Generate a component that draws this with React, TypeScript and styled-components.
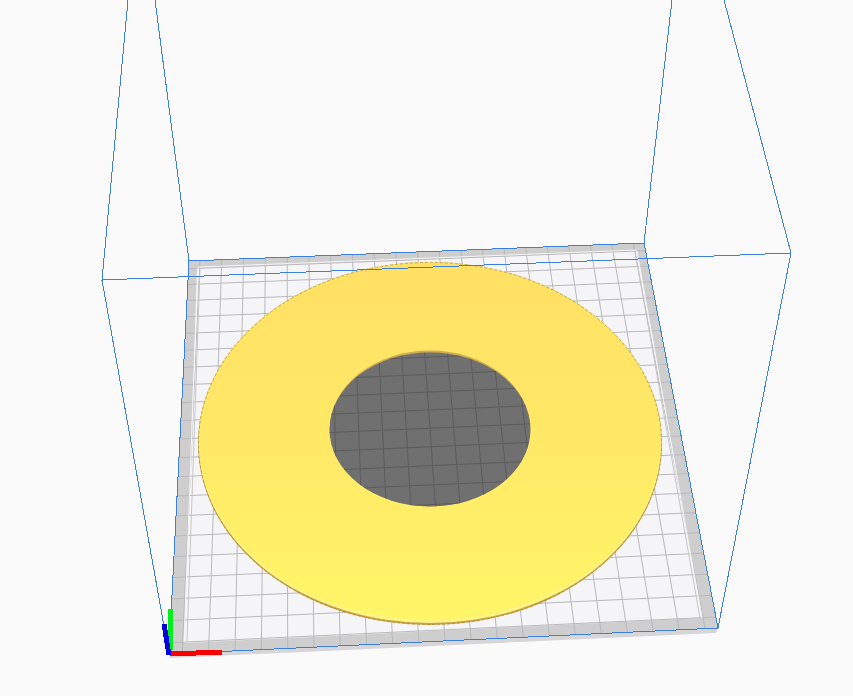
import React from "react";
import styled, { createGlobalStyle } from "styled-components";

const GlobalStyle = createGlobalStyle`
  body {
    margin: 0;
    background: #fafafb;
  }
`;

const Viewport = styled.main`
  width: 100%;
  background: #fafafb;
  overflow: hidden;
`;

const Scene = styled.svg`
  display: block;
  width: 100%;
  height: auto;
`;

const GridLine = styled.path<{ $dark?: boolean }>`
  fill: none;
  stroke: ${(p) => (p.$dark ? "#5c5c5c" : "#b9b9bc")};
  stroke-width: 1;
`;

const VolumeEdge = styled.path`
  fill: none;
  stroke: #3b80d9;
  stroke-width: 1;
  shape-rendering: crispEdges;
`;

const Axis = styled.path<{ $color: string }>`
  fill: none;
  stroke: ${(p) => p.$color};
  stroke-width: 5;
  shape-rendering: crispEdges;
`;

type Point = [number, number];

const CELLS = 21;
const backLeft: Point = [189, 261];
const backRight: Point = [644, 243];
const frontRight: Point = [718, 628];
const frontLeft: Point = [169, 654];

/* Perspective mapping from the unit square to the build plate. */
function makeProjection(a: Point, b: Point, c: Point, d: Point) {
  const sx = a[0] - b[0] + c[0] - d[0];
  const sy = a[1] - b[1] + c[1] - d[1];
  const dx1 = b[0] - c[0];
  const dx2 = d[0] - c[0];
  const dy1 = b[1] - c[1];
  const dy2 = d[1] - c[1];
  const det = dx1 * dy2 - dx2 * dy1;
  const g = (sx * dy2 - dx2 * sy) / det;
  const h = (dx1 * sy - sx * dy1) / det;
  return (u: number, v: number): Point => {
    const w = 1 + g * u + h * v;
    return [
      (a[0] + (b[0] * (1 + g) - a[0]) * u + (d[0] * (1 + h) - a[0]) * v) / w,
      (a[1] + (b[1] * (1 + g) - a[1]) * u + (d[1] * (1 + h) - a[1]) * v) / w,
    ];
  };
}

const project = makeProjection(backLeft, backRight, frontRight, frontLeft);

function segment(from: Point, to: Point) {
  return `M${from[0].toFixed(2)} ${from[1].toFixed(2)}L${to[0].toFixed(2)} ${to[1].toFixed(2)}`;
}

const gridPath = Array.from({ length: CELLS }, (_, i) => {
  const t = (i + 0.5) / CELLS;
  return segment(project(t, 0), project(t, 1)) + segment(project(0, t), project(1, t));
}).join("");

function BuildPlate() {
  return (
    <g>
      <path d="M169 654L718 628L716 633L170 658Z" fill="#d6d6d9" />
      <path d="M189 261L644 243L718 628L169 654Z" fill="#cecece" />
      <path d="M197 268L637 251L703 618L184 643Z" fill="#f5f5f7" />
      <GridLine d={gridPath} />
      <path d="M198 268L184 642M637 251L702 618M198 267L637 250" fill="none" stroke="#f4f4f5" />
      <path d="M200 268L187 642M635 251L700 618" fill="none" stroke="#c6c6c8" />
    </g>
  );
}

function Disc() {
  return (
    <g>
      <ellipse cx="430" cy="443.5" rx="232" ry="181.5" fill="#c9a544" />
      <ellipse cx="430" cy="442.5" rx="231.5" ry="180.5" fill="#fff58a" />
      <ellipse cx="430" cy="441.5" rx="231" ry="179" fill="url(#discSurface)" />
      <ellipse
        cx="430"
        cy="443.5"
        rx="231.5"
        ry="181"
        fill="none"
        stroke="#9c8036"
        strokeOpacity="0.6"
        strokeDasharray="3 2"
      />
      <ellipse cx="430" cy="428.5" rx="100" ry="78" fill="#cfae4e" />
      <ellipse cx="430" cy="429.5" rx="100.5" ry="77" fill="#707070" />
      <g clipPath="url(#discHole)">
        <GridLine $dark d={gridPath} />
      </g>
    </g>
  );
}

export default function App() {
  return (
    <>
      <GlobalStyle />
      <Viewport>
        <Scene viewBox="0 0 853 696" role="img" aria-label="Flat ring on a printer build plate">
          <defs>
            <linearGradient id="discSurface" x1="0" y1="0" x2="0" y2="1">
              <stop offset="0" stopColor="#ffe064" />
              <stop offset="0.5" stopColor="#ffe967" />
              <stop offset="1" stopColor="#fff568" />
            </linearGradient>
            <clipPath id="discHole">
              <ellipse cx="430" cy="429.5" rx="100.5" ry="77" />
            </clipPath>
          </defs>
          <BuildPlate />
          <Disc />
          <VolumeEdge d="M189 261L644 243L718 628L169 654Z" />
          <VolumeEdge d="M128 0L102 280L791 253L724 0M155 0L189 261M672 0L644 243M102 280L169 654M791 253L718 628" />
          <Axis $color="#00ee1c" d="M171 609L170 651" />
          <Axis $color="#f80000" d="M170 654L222 652" />
          <Axis $color="#0000e0" d="M164 624L169 655" />
        </Scene>
      </Viewport>
    </>
  );
}
